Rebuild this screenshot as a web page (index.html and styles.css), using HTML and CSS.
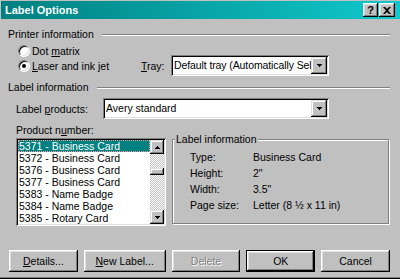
FILE: index.html
```html
<!DOCTYPE html>
<html lang="en">
<head>
  <meta charset="UTF-8">
  <title>Label Options</title>
  <link rel="stylesheet" href="styles.css">
</head>
<body>
  <div class="window">
    <div class="titlebar">
      <span class="title">Label Options</span>
      <div class="title-buttons">
        <span class="tbtn help">?</span>
        <span class="tbtn">
          <svg width="8" height="7" viewBox="0 0 8 7"><path d="M0 0h2l2 2 2-2h2l-3 3.5 3 3.5h-2l-2-2-2 2h-2l3-3.5z"/></svg>
        </span>
      </div>
    </div>

    <div class="content">
      <div class="group-head">Printer information</div>

      <div class="radio-row dot-row">
        <label class="radio"><span class="radio-box"></span><span>Dot <u>m</u>atrix</span></label>
      </div>
      <div class="radio-row laser-row">
        <label class="radio"><span class="radio-box checked"></span><span><u>L</u>aser and ink jet</span></label>
        <span class="tray-label"><u>T</u>ray:</span>
        <div class="combo tray-combo">
          <span class="combo-text">Default tray (Automatically Select)</span>
          <span class="combo-btn"><svg width="5" height="3" viewBox="0 0 5 3"><path d="M0 0h5v1h-1v1h-1v1h-1v-1h-1v-1h-1z"/></svg></span>
        </div>
      </div>

      <div class="group-head second">Label information</div>

      <div class="products-row">
        <span class="products-label">Label <u>p</u>roducts:</span>
        <div class="combo products-combo">
          <span class="combo-text">Avery standard</span>
          <span class="combo-btn"><svg width="5" height="3" viewBox="0 0 5 3"><path d="M0 0h5v1h-1v1h-1v1h-1v-1h-1v-1h-1z"/></svg></span>
        </div>
      </div>

      <div class="lower">
        <div class="product-col">
          <div class="product-label">Product n<u>u</u>mber:</div>
          <div class="listbox">
            <ul class="items">
              <li class="item selected">5371 - Business Card</li>
              <li class="item">5372 - Business Card</li>
              <li class="item">5376 - Business Card</li>
              <li class="item">5377 - Business Card</li>
              <li class="item">5383 - Name Badge</li>
              <li class="item">5384 - Name Badge</li>
              <li class="item">5385 - Rotary Card</li>
            </ul>
            <div class="scrollbar">
              <span class="sb-btn"><svg width="5" height="3" viewBox="0 0 5 3"><path d="M0 3h5v-1h-1v-1h-1v-1h-1v1h-1v1h-1z"/></svg></span>
              <span class="sb-track-top"></span>
              <span class="sb-thumb"></span>
              <span class="sb-track"></span>
              <span class="sb-btn"><svg width="5" height="3" viewBox="0 0 5 3"><path d="M0 0h5v1h-1v1h-1v1h-1v-1h-1v-1h-1z"/></svg></span>
            </div>
          </div>
        </div>

        <fieldset class="info-group">
          <legend>Label information</legend>
          <div class="info-grid">
            <span>Type:</span><span>Business Card</span>
            <span>Height:</span><span>2"</span>
            <span>Width:</span><span>3.5"</span>
            <span>Page size:</span><span>Letter (8 ½ x 11 in)</span>
          </div>
        </fieldset>
      </div>

      <div class="buttons">
        <button class="btn details"><span><u>D</u>etails...</span></button>
        <button class="btn new-label"><span><u>N</u>ew Label...</span></button>
        <button class="btn delete" disabled><span>Delete</span></button>
        <button class="btn ok default"><span>OK</span></button>
        <button class="btn cancel"><span>Cancel</span></button>
      </div>
    </div>
  </div>
</body>
</html>
```

FILE: styles.css
```css
body {
  margin: 0;
  font-family: "Liberation Sans", Arial, sans-serif;
  font-size: 10.5px;
  color: #000;
  background: #c0c0c0;
}
u {
  text-decoration: underline;
  text-underline-offset: 1px;
}
.window {
  width: 400px;
  height: 279px;
  box-sizing: border-box;
  background: #c0c0c0;
  padding: 1px 0 2px 1px;
  box-shadow: inset 0 -1px #000, inset 0 -2px #808080;
  display: flex;
  flex-direction: column;
}
.titlebar {
  height: 18px;
  display: flex;
  align-items: center;
  justify-content: space-between;
  padding: 0 5px 0 4px;
  background: linear-gradient(to right, #008080, #10c8cc);
  color: #fff;
}
.title {
  font-weight: bold;
  font-size: 11px;
}
.title-buttons {
  display: flex;
  gap: 1px;
}
.tbtn {
  width: 16px;
  height: 14px;
  box-sizing: border-box;
  background: #c0c0c0;
  box-shadow: inset -1px -1px #000, inset 1px 1px #fff, inset -2px -2px #808080, inset 2px 2px #dfdfdf;
  display: flex;
  align-items: center;
  justify-content: center;
  color: #000;
  font-weight: bold;
  font-size: 11px;
}
.tbtn.help {
  width: 15px;
}
.content {
  flex: 1;
  display: flex;
  flex-direction: column;
  padding: 0 10px 0 7px;
}
.group-head {
  display: flex;
  align-items: center;
  gap: 8px;
  line-height: 13px;
  margin-top: 9px;
}
.group-head::after {
  content: "";
  flex: 1;
  border-top: 1px solid #808080;
  border-bottom: 1px solid #fff;
}
.group-head.second {
  margin-top: 5px;
}
.radio-row {
  display: flex;
  align-items: center;
  padding-left: 10px;
}
.dot-row {
  margin-top: 5px;
  height: 9px;
}
.laser-row {
  height: 21px;
}
.radio {
  display: flex;
  align-items: center;
  gap: 2px;
}
.laser-row .radio {
  width: 123px;
}
.radio-box {
  width: 12px;
  height: 12px;
  box-sizing: border-box;
  border-radius: 50%;
  border: 1px solid;
  border-color: #808080 #fff #fff #808080;
  background: #fff;
  box-shadow: inset 1px 1px #000, inset -1px -1px #dfdfdf;
  display: flex;
  align-items: center;
  justify-content: center;
}
.radio-box.checked::after {
  content: "";
  width: 4px;
  height: 4px;
  border-radius: 50%;
  background: #000;
}
.tray-label {
  width: 30px;
}
.combo {
  display: flex;
  height: 21px;
  box-sizing: border-box;
  background: #fff;
  box-shadow: inset 1px 1px #808080, inset -1px -1px #fff, inset 2px 2px #000, inset -2px -2px #dfdfdf;
  padding: 2px;
}
.tray-combo {
  width: 158px;
}
.products-combo {
  width: 226px;
}
.combo-text {
  flex: 1;
  padding-left: 1px;
  line-height: 17px;
  white-space: nowrap;
  overflow: hidden;
}
.tray-combo .combo-text {
  letter-spacing: -0.1px;
}
.combo-btn {
  width: 16px;
  height: 17px;
  box-sizing: border-box;
  background: #c0c0c0;
  box-shadow: inset -1px -1px #000, inset 1px 1px #dfdfdf, inset -2px -2px #808080, inset 2px 2px #fff;
  display: flex;
  align-items: center;
  justify-content: center;
}
.products-row {
  display: flex;
  align-items: center;
  margin-top: 4px;
  padding-left: 8px;
}
.products-label {
  width: 87px;
}
.lower {
  display: flex;
  align-items: flex-start;
  gap: 6px;
  margin-top: 5px;
  padding-left: 8px;
}
.product-col {
  width: 150px;
}
.product-label {
  line-height: 13px;
}
.listbox {
  margin-top: 1px;
  height: 88px;
  box-sizing: border-box;
  background: #fff;
  box-shadow: inset 1px 1px #808080, inset -1px -1px #fff, inset 2px 2px #000, inset -2px -2px #dfdfdf;
  padding: 2px;
  display: flex;
}
.items {
  flex: 1;
  list-style: none;
  margin: 0;
  padding: 0;
}
.item {
  height: 12px;
  line-height: 12px;
  padding-left: 1px;
  white-space: nowrap;
}
.item.selected {
  background: #008080;
  color: #fff;
  outline: 1px dotted #f4a4a4;
  outline-offset: -1px;
}
.scrollbar {
  width: 14px;
  display: flex;
  flex-direction: column;
  background: repeating-conic-gradient(#c0c0c0 0 25%, #fff 0 50%) 0 0 / 2px 2px;
}
.sb-btn {
  height: 14px;
  box-sizing: border-box;
  background: #c0c0c0;
  box-shadow: inset -1px -1px #000, inset 1px 1px #dfdfdf, inset -2px -2px #808080, inset 2px 2px #fff;
  display: flex;
  align-items: center;
  justify-content: center;
}
.sb-track-top {
  height: 14px;
}
.sb-thumb {
  height: 7px;
  background: #c0c0c0;
  box-shadow: inset -1px -1px #000, inset 1px 1px #dfdfdf, inset -2px -2px #808080, inset 2px 2px #fff;
}
.sb-track {
  flex: 1;
}
.info-group {
  width: 217px;
  height: 91px;
  box-sizing: border-box;
  margin: 9px 0 0;
  padding: 0;
  border: 1px solid #808080;
  box-shadow: inset 1px 1px #fff, 1px 1px #fff;
}
.info-group legend {
  margin-left: 2px;
  padding: 0 1px;
  line-height: 13px;
  background: #c0c0c0;
}
.info-grid {
  display: grid;
  grid-template-columns: 63px auto;
  grid-auto-rows: 16px;
  align-items: center;
  padding: 3px 0 0 17px;
}
.buttons {
  display: flex;
  gap: 6px;
  margin-top: 24px;
  padding-left: 1px;
}
.btn {
  height: 22px;
  box-sizing: border-box;
  border: none;
  padding: 0;
  font: inherit;
  color: #000;
  background: #c0c0c0;
  box-shadow: inset -1px -1px #000, inset 1px 1px #fff, inset -2px -2px #808080, inset 2px 2px #dfdfdf;
  display: flex;
  align-items: center;
  justify-content: center;
}
.details { width: 69px; }
.new-label { width: 82px; }
.delete { width: 69px; }
.ok { width: 69px; }
.cancel { width: 69px; }
.btn.default {
  border: 1px solid #000;
}
.btn:disabled {
  color: #808080;
  text-shadow: 1px 1px #fff;
}
```
